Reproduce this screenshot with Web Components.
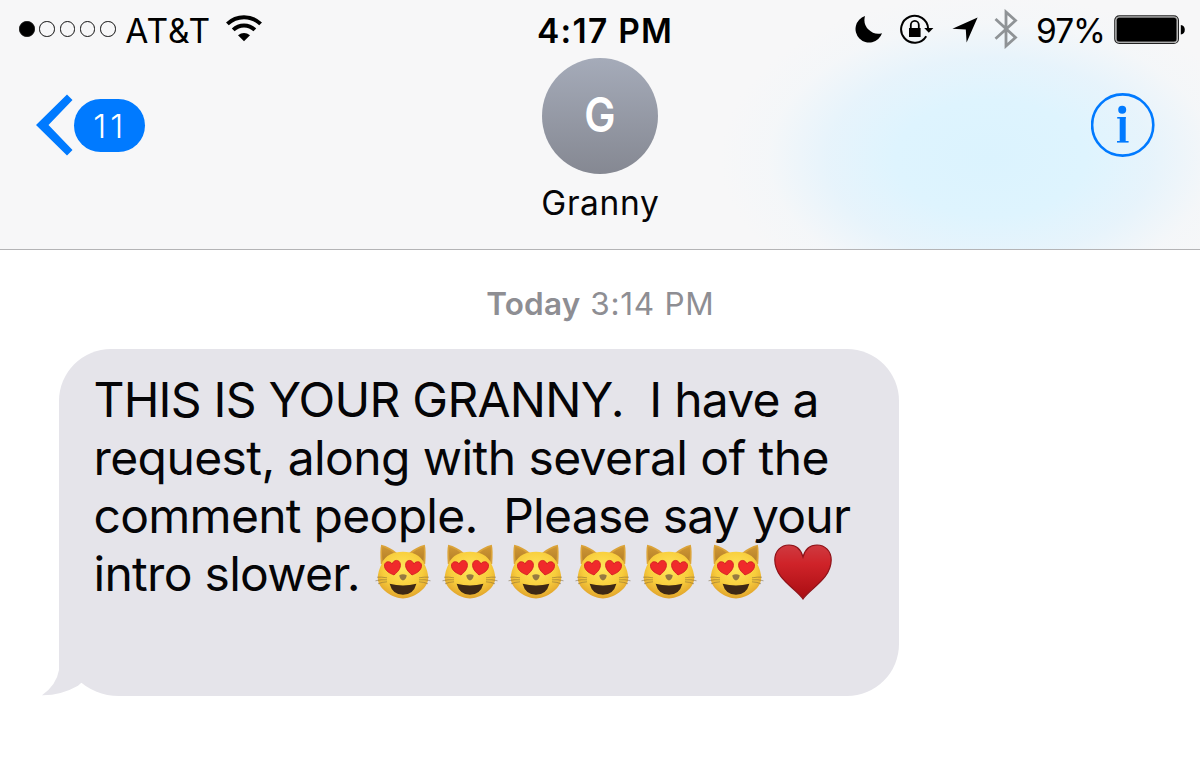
<!DOCTYPE html>
<html lang="en">
<head>
<meta charset="UTF-8">
<title>Messages</title>
<style>
* {
    margin: 0;
    padding: 0;
    box-sizing: border-box;
}

body {
    width: 1200px;
    height: 784px;
    overflow: hidden;
    background: #fff;
    color: #050507;
    font-family: Inter, "Liberation Sans", sans-serif;
}
</style>
</head>
<body>
<message-app></message-app>

<script>
// One line of text whose tracking is adjusted to fill the given width
class FitText extends HTMLElement {

    constructor() {
        super();
        this.shadowDOM = this.attachShadow({mode: "open"});
    }

    connectedCallback() {
        this.shadowDOM.innerHTML = `
        <style>
        :host {
            display: block;
        }

        span {
            display: block;
            width: max-content;
            white-space: pre;
        }
        </style>
        <span><slot></slot></span>`;
        this.fit();
    }

    fit() {
        const span = this.shadowDOM.querySelector("span");
        const target = Number(this.getAttribute("width"));
        const count = this.textContent.length;
        const spacing = (target - span.getBoundingClientRect().width) / (count - 1);
        span.style.letterSpacing = `${spacing.toFixed(3)}px`;
        span.style.marginRight = `${(-spacing).toFixed(3)}px`;
    }
}
customElements.define("fit-text", FitText);


class SignalDots extends HTMLElement {

    constructor() {
        super();
        this.attachShadow({mode: "open"}).innerHTML = `
        <style>
        :host {
            display: flex;
            gap: 4.8px;
        }

        i {
            box-sizing: border-box;
            width: 15.5px;
            height: 15.5px;
            border: 1px solid #111;
            border-radius: 50%;
        }

        i:first-of-type {
            background: #000;
        }
        </style>
        <i></i><i></i><i></i><i></i><i></i>`;
    }
}
customElements.define("signal-dots", SignalDots);


class StatusIcon extends HTMLElement {

    constructor() {
        super();
        this.shadowDOM = this.attachShadow({mode: "open"});
    }

    connectedCallback() {
        const icons = {
            wifi: `<svg width="36" height="28" viewBox="0 0 36 28">
                <g fill="none" stroke="#000" stroke-width="4">
                    <path d="M1.4 9.9 A24 24 0 0 1 34.6 9.9"/>
                    <path d="M7.2 15.9 A15.6 15.6 0 0 1 28.8 15.9"/>
                </g>
                <path d="M18 27.3 L12 21.3 Q18 16.6 24 21.3Z"/>
            </svg>`,
            moon: `<svg width="28" height="28" viewBox="0 0 28 28">
                <path d="M10 1 A13.6 13.6 0 1 0 27 18.3 A14 14 0 0 1 10 1Z"/>
            </svg>`,
            lock: `<svg width="34" height="30" viewBox="0 0 34 30">
                <path d="M28.1 14.5 A13.5 13.5 0 1 0 26.2 22.2" fill="none" stroke="#000" stroke-width="2"/>
                <path d="M24.2 14 H33.4 L28.8 18.8Z"/>
                <rect x="9" y="14" width="11.6" height="9"/>
                <path d="M10.8 14.5 V11 a4 4.2 0 0 1 8 0 V14.5" fill="none" stroke="#000" stroke-width="1.8"/>
            </svg>`,
            arrow: `<svg width="26" height="26" viewBox="0 0 26 26">
                <path d="M25.6 .5 L14.6 25.4 L13.8 12.5 L.4 11.7Z"/>
            </svg>`,
            bluetooth: `<svg width="24" height="40" viewBox="0 0 24 40">
                <path d="M1.5 10 L21.5 28.5 L12 37 V3 L21.5 11.5 L1.5 29.8" fill="none" stroke="#8f9396" stroke-width="2.8"/>
            </svg>`,
            battery: `<svg width="72" height="30" viewBox="0 0 72 30">
                <rect x=".8" y=".8" width="63.6" height="27.6" rx="4.5" fill="none" stroke="#222" stroke-width="1.2"/>
                <rect x="1.8" y="1.8" width="61.6" height="25.6" rx="3.5" fill="#9a9a9a"/>
                <rect x="2.8" y="2.8" width="59.6" height="23.6" rx="2.5"/>
                <path d="M66.8 10 Q70.8 10.5 70.8 14.8 Q70.8 19 66.8 19.6Z"/>
            </svg>`
        };
        this.shadowDOM.innerHTML = `
        <style>
        :host {
            display: block;
        }

        svg {
            display: block;
        }
        </style>
        ${icons[this.getAttribute("name")]}`;
    }
}
customElements.define("status-icon", StatusIcon);


class StatusBar extends HTMLElement {

    constructor() {
        super();
        this.attachShadow({mode: "open"}).innerHTML = `
        <style>
        :host {
            box-sizing: border-box;
            display: grid;
            grid-template-columns: 1fr auto 1fr;
            height: 58px;
            padding: 0 14px 0 19px;
            color: #000;
            font-size: 33.5px;
            line-height: 40px;
        }

        .side {
            display: flex;
            align-items: flex-start;
        }

        .right {
            justify-content: flex-end;
        }

        signal-dots {
            margin-top: 21px;
        }

        fit-text {
            margin-top: 11px;
        }

        .carrier {
            margin-left: 9.5px;
        }

        .clock {
            margin-left: 4px;
            font-weight: 600;
        }
        </style>
        <div class="side">
            <signal-dots></signal-dots>
            <fit-text class="carrier" width="85">AT&amp;T</fit-text>
            <status-icon name="wifi" style="margin: 14px 0 0 16px"></status-icon>
        </div>
        <fit-text class="clock" width="135">4:17 PM</fit-text>
        <div class="side right">
            <status-icon name="moon" style="margin: 15px 17px 0 0"></status-icon>
            <status-icon name="lock" style="margin: 14px 18px 0 0"></status-icon>
            <status-icon name="arrow" style="margin: 17px 16px 0 0"></status-icon>
            <status-icon name="bluetooth" style="margin: 9px 18px 0 0"></status-icon>
            <fit-text width="70">97%</fit-text>
            <status-icon name="battery" style="margin: 15px 0 0 8px"></status-icon>
        </div>`;
    }
}
customElements.define("status-bar", StatusBar);


class BackButton extends HTMLElement {

    constructor() {
        super();
        this.attachShadow({mode: "open"}).innerHTML = `
        <style>
        :host {
            display: flex;
            align-items: center;
            gap: 1px;
            height: 62px;
        }

        .badge {
            display: flex;
            justify-content: center;
            box-sizing: border-box;
            width: 70.5px;
            height: 53px;
            padding-right: 2px;
            border-radius: 26.5px;
            background: #007aff;
            color: #fff;
            font-size: 33px;
            font-weight: 350;
            line-height: 54px;
        }
        </style>
        <svg width="37" height="62" viewBox="0 0 37 62">
            <path d="M31 .5 L36.5 6 L12.5 31 L36.5 56 L31 61.5 L0 31Z" fill="#007aff"/>
        </svg>
        <div class="badge"><slot></slot></div>`;
    }
}
customElements.define("back-button", BackButton);


class ContactCard extends HTMLElement {

    constructor() {
        super();
        this.attachShadow({mode: "open"}).innerHTML = `
        <style>
        :host {
            display: flex;
            flex-direction: column;
            align-items: center;
        }

        .avatar {
            width: 116px;
            height: 116px;
            border-radius: 50%;
            background: linear-gradient(#a5abb9, #858892);
            color: #fff;
            font-size: 48px;
            font-weight: 600;
            line-height: 113px;
            text-align: center;
        }

        .avatar span {
            display: inline-block;
            transform: scaleX(.87);
        }

        .name {
            margin-top: 9px;
            font-size: 33.5px;
            line-height: 41px;
        }
        </style>
        <div class="avatar"><span><slot name="initial"></slot></span></div>
        <div class="name"><slot></slot></div>`;
    }
}
customElements.define("contact-card", ContactCard);


class InfoButton extends HTMLElement {

    constructor() {
        super();
        this.attachShadow({mode: "open"}).innerHTML = `
        <style>
        :host {
            display: block;
            width: 64px;
            height: 64px;
        }

        svg {
            display: block;
        }
        </style>
        <svg width="64" height="64" viewBox="0 0 64 64" fill="#007aff">
            <circle cx="31.7" cy="32" r="30.6" fill="none" stroke="#007aff" stroke-width="2.6"/>
            <circle cx="31.2" cy="16.8" r="4"/>
            <rect x="26.2" y="24" width="8.5" height="1.6"/>
            <rect x="28.7" y="24" width="6" height="25"/>
            <rect x="26" y="48" width="11.6" height="1.6"/>
        </svg>`;
    }
}
customElements.define("info-button", InfoButton);


class NavHeader extends HTMLElement {

    constructor() {
        super();
        this.attachShadow({mode: "open"}).innerHTML = `
        <style>
        :host {
            box-sizing: border-box;
            display: block;
            height: 250px;
            border-bottom: 1px solid #b4b4b6;
            background:
                radial-gradient(ellipse 270px 165px at 990px 158px, #dbf3fe 0%, #def4fe 35%, rgba(228, 243, 252, .85) 60%, rgba(240, 246, 250, .4) 82%, rgba(247, 247, 248, 0) 100%),
                #f7f7f8;
        }

        .bar {
            display: grid;
            grid-template-columns: 1fr auto 1fr;
            padding: 0 45px 0 36px;
        }

        back-button {
            margin-top: 36px;
        }

        contact-card {
            margin-left: 9px;
        }

        info-button {
            justify-self: end;
            margin-top: 35px;
        }
        </style>
        <status-bar></status-bar>
        <div class="bar">
            <back-button><fit-text width="30">11</fit-text></back-button>
            <contact-card>
                <span slot="initial">G</span>
                <fit-text width="117.5">Granny</fit-text>
            </contact-card>
            <info-button></info-button>
        </div>`;
    }
}
customElements.define("nav-header", NavHeader);


class CatEmoji extends HTMLElement {

    constructor() {
        super();
        this.attachShadow({mode: "open"}).innerHTML = `
        <style>
        :host {
            display: block;
            width: 56px;
            height: 56px;
        }

        svg {
            display: block;
        }
        </style>
        <svg width="56" height="56" viewBox="0 0 56 56">
            <defs>
                <radialGradient id="face" cx=".5" cy=".36" r=".66">
                    <stop offset="0" stop-color="#ffe65a"/>
                    <stop offset=".6" stop-color="#f8cd3c"/>
                    <stop offset="1" stop-color="#dfa02b"/>
                </radialGradient>
                <linearGradient id="ear" x1="0" y1="0" x2="0" y2="1">
                    <stop offset="0" stop-color="#cf9733"/>
                    <stop offset="1" stop-color="#b5802a"/>
                </linearGradient>
                <path id="eye" d="M0 7.4 C-4 5.2 -8 2 -8 -2.4 C-8 -7.4 -1.8 -8 0 -3.6 C1.8 -8 8 -7.4 8 -2.4 C8 2 4 5.2 0 7.4Z" fill="#f02a2b" stroke="#d01a20" stroke-width=".8"/>
            </defs>
            <path d="M5.8 20 Q4.8 6 6.2 .8 Q15 3 22 9 H34 Q41 3 49.800 .8 Q51.2 6 50.2 20Z" fill="#dba338"/>
            <path d="M7.6 17 Q6.4 7 7.400 2.400 Q14.500 5 19.500 9.6Z M48.4 17 Q49.6 7 48.600 2.400 Q41.5 5 36.5 9.6Z" fill="url(#ear)"/>
            <path d="M28 7.800 C38 7.800 45.500 11.500 49 19 C51.500 24 53.500 30 53.200 35 C52.600 45 38 54.400 28 54.400 C18 54.400 3.400 45 2.800 35 C2.500 30 4.500 24 7 19 C10.500 11.500 18 7.800 28 7.800Z" fill="url(#face)"/>
            <use href="#eye" transform="translate(17.8 23.6) rotate(-9)"/>
            <use href="#eye" transform="translate(38.2 23.6) rotate(9)"/>
            <path d="M24.300 31.200 Q28 29.300 31.700 31.200 Q31.500 34.800 28 36.600 Q24.500 34.800 24.300 31.200Z" fill="#967a42"/>
            <path d="M14.600 39.800 Q28 43.400 41.400 39.800 Q38.500 50.800 28 50.800 Q17.500 50.800 14.600 39.800Z" fill="#3e2815"/>
            <path d="M12 33.800 Q6 32.800 2 33.200 M12 35.800 Q6 35.200 .5 36.800 M12 37.800 Q7 38 3 39.800 M44 33.800 Q50 32.800 54 33.200 M44 35.800 Q50 35.200 55.5 36.800 M44 37.800 Q49 38 53 39.800" fill="none" stroke="#7d6538" stroke-opacity=".75" stroke-width=".7"/>
        </svg>`;
    }
}
customElements.define("cat-emoji", CatEmoji);


class HeartEmoji extends HTMLElement {

    constructor() {
        super();
        this.attachShadow({mode: "open"}).innerHTML = `
        <style>
        :host {
            display: block;
            width: 58px;
            height: 56px;
        }

        svg {
            display: block;
        }
        </style>
        <svg width="58" height="56" viewBox="0 0 58 56">
            <defs>
                <linearGradient id="red" x1="0" y1="0" x2="0" y2="1">
                    <stop offset="0" stop-color="#cf3a40"/>
                    <stop offset=".35" stop-color="#cf2329"/>
                    <stop offset="1" stop-color="#a90d12"/>
                </linearGradient>
            </defs>
            <path d="M29 55 C23 45 .8 35 .8 16 C.8 7 7 1 15 1 C22 1 27 5.5 29 13 C31 5.5 36 1 43 1 C51 1 57.2 7 57.2 16 C57.2 35 35 45 29 55Z" fill="url(#red)" stroke="#8f1218" stroke-width="1.2"/>
        </svg>`;
    }
}
customElements.define("heart-emoji", HeartEmoji);


class MessageBubble extends HTMLElement {

    constructor() {
        super();
        this.attachShadow({mode: "open"}).innerHTML = `
        <style>
        :host {
            box-sizing: border-box;
            display: block;
            position: relative;
            width: 840px;
            height: 346.5px;
            padding: 22px 0 0 34.5px;
            border-radius: 52px 52px 52px 60px;
            background: #e5e4ea;
            font-size: 48px;
            line-height: 58px;
        }

        .tail {
            position: absolute;
            left: -18px;
            bottom: 0;
        }
        </style>
        <slot></slot>
        <svg class="tail" width="60" height="72" viewBox="0 0 60 72">
            <path d="M18 0 V46 Q15.500 61 1 71.300 Q20 71.500 37 61.800 L50 50 V0Z" fill="#e5e4ea"/>
        </svg>`;
    }
}
customElements.define("message-bubble", MessageBubble);


class MessageApp extends HTMLElement {

    constructor() {
        super();
        this.attachShadow({mode: "open"}).innerHTML = `
        <style>
        :host {
            display: block;
        }

        .time {
            display: flex;
            justify-content: center;
            gap: 10px;
            margin: 34px 0 26px;
            color: #8e8e93;
            font-size: 31.5px;
            line-height: 39px;
        }

        .day {
            font-weight: 600;
        }

        message-bubble {
            margin-left: 59px;
        }

        .last {
            display: flex;
            align-items: flex-start;
        }

        .emoji {
            display: flex;
            gap: 10.6px;
            margin: -1px 0 0 14.5px;
        }

        heart-emoji {
            margin-left: -1px;
        }
        </style>
        <nav-header></nav-header>
        <div class="time">
            <fit-text class="day" width="94">Today</fit-text>
            <fit-text width="123.5">3:14 PM</fit-text>
        </div>
        <message-bubble>
            <fit-text width="726">THIS IS YOUR GRANNY.  I have a</fit-text>
            <fit-text width="736">request, along with several of the</fit-text>
            <fit-text width="757.5">comment people.  Please say your</fit-text>
            <div class="last">
                <fit-text width="267">intro slower.</fit-text>
                <div class="emoji">
                    <cat-emoji></cat-emoji>
                    <cat-emoji></cat-emoji>
                    <cat-emoji></cat-emoji>
                    <cat-emoji></cat-emoji>
                    <cat-emoji></cat-emoji>
                    <cat-emoji></cat-emoji>
                    <heart-emoji></heart-emoji>
                </div>
            </div>
        </message-bubble>`;
    }
}
customElements.define("message-app", MessageApp);
</script>
</body>
</html>
